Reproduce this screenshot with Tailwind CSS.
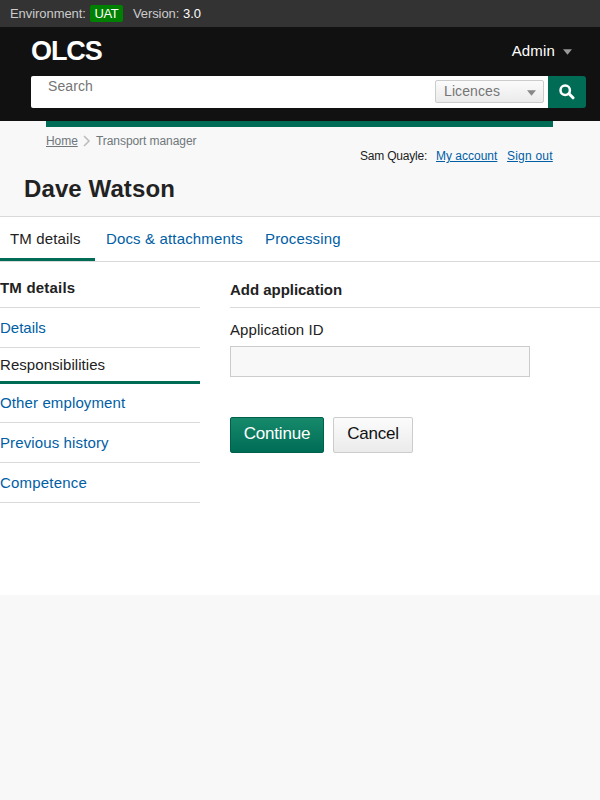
<!DOCTYPE html>
<html lang="en">
<head>
<meta charset="utf-8">
<title>OLCS</title>
<script src="https://cdn.jsdelivr.net/npm/@tailwindcss/browser@4"></script>
</head>
<body class="min-h-screen bg-[#f8f8f8] font-['Liberation_Sans',Arial,sans-serif] text-[15px] leading-5 text-[#222]">
<div class="flex h-[27px] items-center bg-[#333] pl-[10px] text-[13px] leading-[17px] whitespace-nowrap text-[#ccc]">
  <span class="w-[76px] tracking-[-0.06px]">Environment:</span>
  <span class="ml-1 w-[33px] rounded-[2px] bg-[#008000] text-center tracking-[-0.4px] text-white">UAT</span>
  <span class="ml-[10px] w-[45px] tracking-[-0.1px]">Version:</span>
  <span class="ml-[5px] text-white">3.0</span>
</div>
<header class="h-[94px] bg-[#111] pr-[14px] pl-[31px] text-white">
  <div class="flex h-[49px] items-center justify-between pr-[14px]">
    <span class="-mt-[2px] text-[27px] leading-[30px] font-bold tracking-[-1.1px]">OLCS</span>
    <a class="-mt-px flex items-center gap-2 tracking-[0.15px]">Admin
      <svg class="mt-px h-[6px] w-[9px] fill-[#999]" viewBox="0 0 9 6"><path d="M0 .3h9L4.5 5.7z"/></svg>
    </a>
  </div>
  <form class="flex h-8">
    <div class="flex flex-1 justify-between rounded-l-[2px] bg-white pr-1 pl-[17px] text-sm leading-5 tracking-[0.1px] text-[#757575]">
      <span>Search</span>
      <div class="mt-1 flex h-[23px] w-[109px] items-center justify-between rounded-[2px] border border-[#ccc] bg-linear-to-b from-[#fbfbfb] to-[#ebebeb] pr-[7px] pl-2">
        <span class="-mt-px">Licences</span>
        <svg class="mt-0.5 h-[6px] w-[9px] fill-[#888]" viewBox="0 0 9 6"><path d="M0 .3h9L4.5 5.7z"/></svg>
      </div>
    </div>
    <button type="button" aria-label="Search" class="flex w-[38px] items-center justify-center rounded-r-[3px] bg-[#006c56]">
      <svg class="-mt-px h-4 w-4" viewBox="0 0 16 16" fill="none" stroke="#fff" stroke-linecap="round"><circle cx="6.2" cy="6.2" r="4.7" stroke-width="2.5"/><path d="M10 9.8l4 4" stroke-width="3"/></svg>
    </button>
  </form>
</header>
<div class="h-[96px] border-b border-[#d9d9d9]">
  <div class="mr-[47px] ml-[46px] h-[54px] border-t-[6px] border-[#006c56] text-xs whitespace-nowrap">
    <nav class="mt-1 flex h-5 items-center tracking-[-0.07px] text-[#6f777b]">
      <a class="w-8 underline">Home</a>
      <svg class="mx-[5px] h-3 w-[8px]" viewBox="0 0 8 12" fill="none" stroke="#bbb" stroke-width="1.5"><path d="M1 1l5 5-5 5"/></svg>
      <span>Transport manager</span>
    </nav>
    <div class="-mt-[5px] flex justify-end pt-[2px] text-[#222]">
      <span class="w-[67px] tracking-[-0.2px]">Sam Quayle:</span>
      <a class="ml-[9px] w-[62px] text-[#005ea5] underline">My account</a>
      <a class="ml-[9px] w-[46px] tracking-[0.22px] text-[#005ea5] underline">Sign out</a>
    </div>
  </div>
  <h1 class="pl-6 text-2xl leading-7 font-bold tracking-[0.1px]">Dave Watson</h1>
</div>
<nav class="flex h-[45px] border-b border-[#d9d9d9] bg-white tracking-[0.15px] whitespace-nowrap text-[#005ea5]">
  <a class="w-[95px] border-b-[3px] border-[#006c56] pt-3 pl-[10px] text-[#222]">TM details</a>
  <a class="ml-[11px] w-[137px] pt-3">Docs &amp; attachments</a>
  <a class="ml-[22px] pt-3">Processing</a>
</nav>
<main class="flex h-[333px] gap-[30px] bg-white">
  <aside class="w-[200px] tracking-[0.12px] text-[#005ea5]">
    <h2 class="h-[46px] border-b border-[#d9d9d9] pt-4 font-bold tracking-[0.2px] text-[#222]">TM details</h2>
    <a class="block h-10 border-b border-[#d9d9d9] pt-[10px] tracking-normal">Details</a>
    <a class="block h-9 border-b-[3px] border-[#006c56] pt-[7px] tracking-[0.06px] text-[#222]">Responsibilities</a>
    <a class="block h-[39px] border-b border-[#d9d9d9] pt-[9px]">Other employment</a>
    <a class="block h-10 border-b border-[#d9d9d9] pt-[10px]">Previous history</a>
    <a class="block h-10 border-b border-[#d9d9d9] pt-[10px] tracking-[0.2px]">Competence</a>
  </aside>
  <section class="flex-1">
    <h3 class="h-[46px] border-b border-[#d9d9d9] pt-[18px] font-bold tracking-[-0.03px]">Add application</h3>
    <label class="mt-3 block tracking-[0.08px]" for="app">Application ID</label>
    <input id="app" class="mt-[6px] block h-[31px] w-[300px] border border-[#ccc] bg-[#f8f8f8]">
    <div class="mt-10 flex gap-[9px] text-[17px] leading-5 tracking-[-0.2px]">
      <button type="button" class="h-9 w-[94px] rounded-[2px] border border-[#00604d] bg-linear-to-b from-[#168a6b] to-[#006c56] pb-[3px] text-white">Continue</button>
      <button type="button" class="h-9 w-20 rounded-[2px] border border-[#ccc] bg-linear-to-b from-[#fcfcfc] to-[#ebebeb] pb-[3px] text-[#111]">Cancel</button>
    </div>
  </section>
</main>
</body>
</html>
